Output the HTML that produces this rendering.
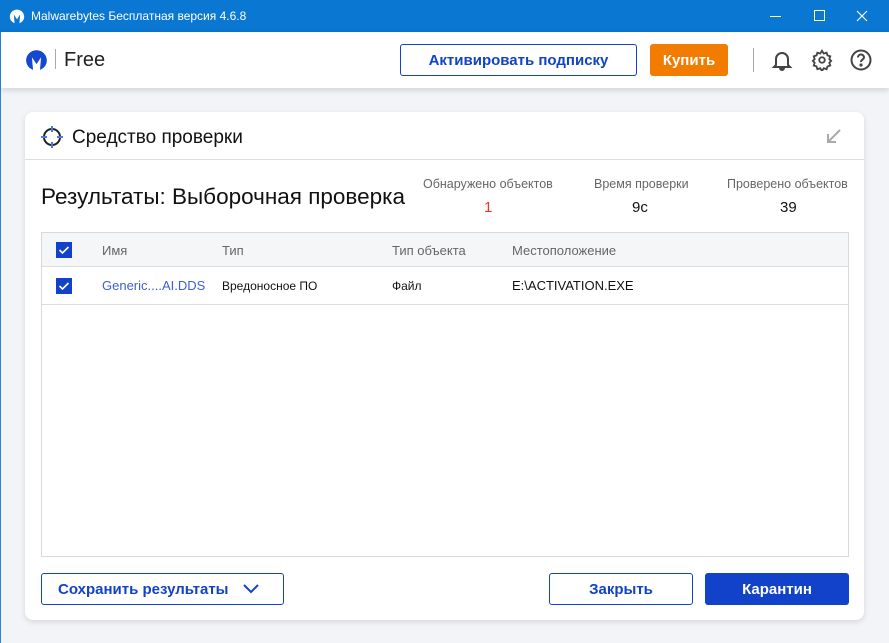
<!DOCTYPE html>
<html><head><meta charset="utf-8"><style>
*{margin:0;padding:0;box-sizing:border-box}
body{width:889px;height:643px;overflow:hidden;background:#f3f4f8;font-family:"Liberation Sans","DejaVu Sans",sans-serif;position:relative;color:#111}
.abs{position:absolute}
#tb{left:0;top:0;width:889px;height:32px;background:#0a77d3;color:#fff;font-size:12px}
#tb .t{left:31px;top:9px}
#lb{left:0;top:32px;width:1px;height:611px;background:#2a86d6}
#hd{left:1px;top:32px;width:888px;height:56px;background:#fff;box-shadow:0 2px 6px rgba(0,0,0,.15)}
.btn{position:absolute;display:flex;align-items:center;justify-content:center;font-weight:bold;font-size:15px;border-radius:3px}
#card{left:25px;top:112px;width:839px;height:508px;background:#fff;border-radius:8px;box-shadow:0 2px 6px rgba(0,0,0,.12)}
.th{font-size:13px;color:#666}
.cb{position:absolute;width:16px;height:16px;background:#1142c9}
</style></head><body>
<div id="tb" class="abs">
<svg class="abs" style="left:9px;top:8px" width="16" height="16" viewBox="0 0 20 20"><path d="M10 2C5 2 1 6 1 11c0 4 3 7 6 8L6 8l4 6 4-6-1 11c3-1 6-4 6-8 0-5-4-9-9-9z" fill="#fff"/></svg>
<div class="abs t">Malwarebytes Бесплатная версия 4.6.8</div>
<div class="abs" style="left:770px;top:16px;width:11px;height:1px;background:#fff"></div>
<div class="abs" style="left:814px;top:10px;width:11px;height:11px;border:1px solid #fff"></div>
<svg class="abs" style="left:856px;top:10px" width="12" height="12"><path d="M1 1l10 10M11 1L1 11" stroke="#fff" stroke-width="1.2"/></svg>
</div>
<div id="lb" class="abs"></div>
<div id="hd" class="abs">
<svg class="abs" style="left:24px;top:16px" width="23" height="23" viewBox="0 0 20 20"><path d="M10 2C5 2 1 6 1 11c0 4 3 7 6 8L6 8l4 6 4-6-1 11c3-1 6-4 6-8 0-5-4-9-9-9z" fill="#1548d0"/></svg>
<div class="abs" style="left:54px;top:17px;width:1px;height:20px;background:#aaa"></div>
<div class="abs" style="left:63px;top:17px;font-size:20px;color:#222">Free</div>
<div class="btn" style="left:399px;top:12px;width:237px;height:32px;border:1px solid #1142c9;color:#1142c9">Активировать подписку</div>
<div class="btn" style="left:649px;top:12px;width:78px;height:32px;background:#f27c00;color:#fff">Купить</div>
<div class="abs" style="left:752px;top:16px;width:1px;height:24px;background:#aaa"></div>
<svg class="abs" style="left:770px;top:17px" width="22" height="22" viewBox="0 0 22 22" fill="none" stroke="#444" stroke-width="2"><path d="M5 16V10a6 6 0 0112 0v6l2 2H3z"/><path d="M9 19a2 2 0 004 0" fill="#444"/></svg>
<svg class="abs" style="left:810px;top:17px" width="22" height="22" viewBox="0 0 24 24" fill="none" stroke="#444" stroke-width="2"><circle cx="12" cy="12" r="3"/><path d="M12 2l2 3 3-1 1 3 3 1-1 3 2 2-2 2 1 3-3 1-1 3-3-1-2 3-2-3-3 1-1-3-3-1 1-3-2-2 2-2-1-3 3-1 1-3 3 1z"/></svg>
<svg class="abs" style="left:849px;top:17px" width="22" height="22" viewBox="0 0 22 22" fill="none" stroke="#444" stroke-width="2"><circle cx="11" cy="11" r="9.5"/><path d="M8 8.5a3 3 0 116 0c0 2-3 2-3 4.5"/><circle cx="11" cy="16" r=".6" fill="#444"/></svg>
</div>
<div id="card" class="abs">
<svg class="abs" style="left:15px;top:13px" width="24" height="24" viewBox="0 0 24 24" fill="none"><circle cx="12" cy="12" r="8" stroke="#222" stroke-width="2"/><path d="M12 1v6M12 17v6M1 12h6M17 12h6" stroke="#4a7be0" stroke-width="2"/></svg>
<div class="abs" style="left:47px;top:15px;font-size:19px">Средство проверки</div>
<svg class="abs" style="left:801px;top:16px" width="16" height="16" viewBox="0 0 16 16" fill="none" stroke="#aaa" stroke-width="2"><path d="M14 2L2 14M2 6v8h8"/></svg>
<div class="abs" style="left:0;top:47px;width:839px;height:1px;background:#dcdde3"></div>
<div class="abs" style="left:16px;top:72px;font-size:22.5px">Результаты: Выборочная проверка</div>
<div class="abs th" style="left:398px;top:65px;font-size:12.5px">Обнаружено объектов</div>
<div class="abs" style="left:459px;top:87px;font-size:15px;color:#e32">1</div>
<div class="abs th" style="left:569px;top:65px;font-size:12.5px">Время проверки</div>
<div class="abs" style="left:607px;top:87px;font-size:15px">9с</div>
<div class="abs th" style="left:702px;top:65px;font-size:12.5px">Проверено объектов</div>
<div class="abs" style="left:755px;top:87px;font-size:15px">39</div>
<div class="abs" style="left:16px;top:120px;width:808px;height:325px;border:1px solid #d8d9e0">
 <div class="abs" style="left:0;top:0;width:806px;height:34px;background:#f5f6f8;border-bottom:1px solid #dcdde3"></div>
 <div class="abs" style="left:0;top:71px;width:806px;height:1px;background:#dcdde3"></div>
 <div class="cb" style="left:14px;top:9px"><svg width="16" height="16"><path d="M3.5 8l3 3 6-6" stroke="#fff" stroke-width="1.6" fill="none"/></svg></div>
 <div class="cb" style="left:14px;top:45px"><svg width="16" height="16"><path d="M3.5 8l3 3 6-6" stroke="#fff" stroke-width="1.6" fill="none"/></svg></div>
 <div class="abs th" style="left:60px;top:10px">Имя</div>
 <div class="abs th" style="left:180px;top:10px">Тип</div>
 <div class="abs th" style="left:350px;top:10px">Тип объекта</div>
 <div class="abs th" style="left:470px;top:10px">Местоположение</div>
 <div class="abs" style="left:60px;top:45px;font-size:13px;color:#3c5fd6">Generic....AI.DDS</div>
 <div class="abs" style="left:180px;top:46px;font-size:12px">Вредоносное ПО</div>
 <div class="abs" style="left:350px;top:46px;font-size:12px">Файл</div>
 <div class="abs" style="left:470px;top:45px;font-size:13px">E:\ACTIVATION.EXE</div>
</div>
<div class="btn" style="left:16px;top:461px;width:243px;height:32px;border:1px solid #1142c9;color:#1142c9;justify-content:flex-start;padding-left:16px">Сохранить результаты<svg style="margin-left:14px" width="16" height="10"><path d="M1 1l7 7 7-7" stroke="#1142c9" stroke-width="2" fill="none"/></svg></div>
<div class="btn" style="left:524px;top:461px;width:144px;height:32px;border:1px solid #1142c9;color:#1142c9">Закрыть</div>
<div class="btn" style="left:680px;top:461px;width:144px;height:32px;background:#1142c9;color:#fff">Карантин</div>
</div>
</body></html>
